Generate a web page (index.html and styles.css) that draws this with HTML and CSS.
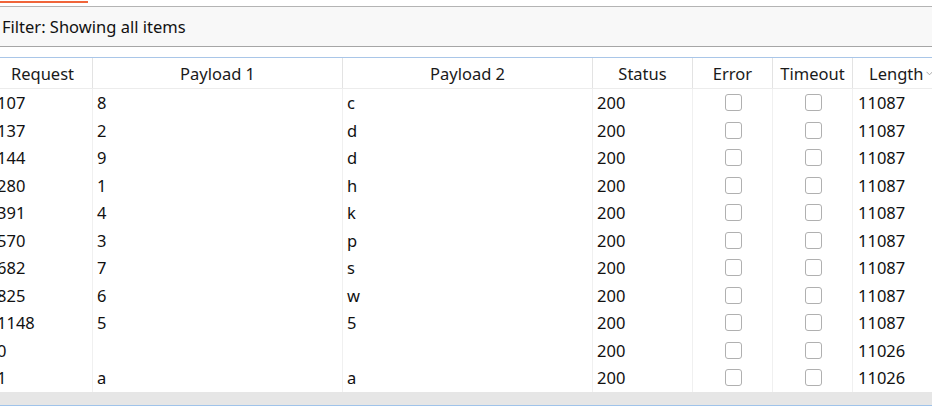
FILE: index.html
```html
<!DOCTYPE html>
<html>
<head>
<meta charset="utf-8">
<link rel="stylesheet" href="styles.css">
</head>
<body>
<div class="tabs"><div class="tab-active"></div></div>
<div class="filter">Filter: Showing all items</div>
<div class="table">
  <div class="row head">
    <div class="c">Request</div>
    <div class="c">Payload 1</div>
    <div class="c">Payload 2</div>
    <div class="c">Status</div>
    <div class="c">Error</div>
    <div class="c">Timeout</div>
    <div class="c last">Length<span class="sort"><svg width="7" height="5" viewBox="0 0 7 5"><path d="M0.5 0.8 L3.5 3.8 L6.5 0.8" fill="none" stroke="#a8a8a8" stroke-width="1"/></svg></span></div>
  </div>
  <div class="body">
    <div class="row"><div class="c">107</div><div class="c">8</div><div class="c">c</div><div class="c">200</div><div class="c cb"><span class="box"></span></div><div class="c cb"><span class="box"></span></div><div class="c last">11087</div></div>
    <div class="row"><div class="c">137</div><div class="c">2</div><div class="c">d</div><div class="c">200</div><div class="c cb"><span class="box"></span></div><div class="c cb"><span class="box"></span></div><div class="c last">11087</div></div>
    <div class="row"><div class="c">144</div><div class="c">9</div><div class="c">d</div><div class="c">200</div><div class="c cb"><span class="box"></span></div><div class="c cb"><span class="box"></span></div><div class="c last">11087</div></div>
    <div class="row"><div class="c">280</div><div class="c">1</div><div class="c">h</div><div class="c">200</div><div class="c cb"><span class="box"></span></div><div class="c cb"><span class="box"></span></div><div class="c last">11087</div></div>
    <div class="row"><div class="c">391</div><div class="c">4</div><div class="c">k</div><div class="c">200</div><div class="c cb"><span class="box"></span></div><div class="c cb"><span class="box"></span></div><div class="c last">11087</div></div>
    <div class="row"><div class="c">570</div><div class="c">3</div><div class="c">p</div><div class="c">200</div><div class="c cb"><span class="box"></span></div><div class="c cb"><span class="box"></span></div><div class="c last">11087</div></div>
    <div class="row"><div class="c">682</div><div class="c">7</div><div class="c">s</div><div class="c">200</div><div class="c cb"><span class="box"></span></div><div class="c cb"><span class="box"></span></div><div class="c last">11087</div></div>
    <div class="row"><div class="c">825</div><div class="c">6</div><div class="c">w</div><div class="c">200</div><div class="c cb"><span class="box"></span></div><div class="c cb"><span class="box"></span></div><div class="c last">11087</div></div>
    <div class="row"><div class="c">1148</div><div class="c">5</div><div class="c">5</div><div class="c">200</div><div class="c cb"><span class="box"></span></div><div class="c cb"><span class="box"></span></div><div class="c last">11087</div></div>
    <div class="row"><div class="c">0</div><div class="c"></div><div class="c"></div><div class="c">200</div><div class="c cb"><span class="box"></span></div><div class="c cb"><span class="box"></span></div><div class="c last">11026</div></div>
    <div class="row"><div class="c">1</div><div class="c">a</div><div class="c">a</div><div class="c">200</div><div class="c cb"><span class="box"></span></div><div class="c cb"><span class="box"></span></div><div class="c last">11026</div></div>
  </div>
  <div class="hscroll"></div>
</div>
</body>
</html>
```

FILE: styles.css
```css
html, body {
  margin: 0;
  padding: 0;
  background: #ffffff;
  overflow: hidden;
}
body {
  width: 932px;
  height: 408px;
  font-family: "Noto Sans", "Open Sans", sans-serif;
  font-size: 16.5px;
  color: #111111;
}
.tabs {
  height: 6px;
  box-sizing: border-box;
  padding-top: 1px;
}
.tab-active {
  width: 88px;
  height: 2px;
  background: #f0653a;
}
.filter {
  height: 41px;
  box-sizing: border-box;
  border-top: 1px solid #b4b4b4;
  border-bottom: 1px solid #a6a6a6;
  background: #f8f8f8;
  padding-left: 2px;
  display: flex;
  align-items: center;
  color: #111111;
}
.table {
  margin-top: 10px;
  margin-left: -7px;
  width: 939px;
  border-top: 1px solid #a9c6e8;
}
.row {
  display: grid;
  grid-template-columns: 100px 250px 250px 100px 80px 80px 79px;
  height: 27.5px;
}
.row .c {
  box-sizing: border-box;
  border-right: 1px solid #f0f0f0;
  padding-left: 4px;
  display: flex;
  align-items: center;
  white-space: nowrap;
  overflow: hidden;
}
.row .c.last {
  border-right: none;
  padding-left: 5px;
}
.head {
  height: 31px;
  box-sizing: border-box;
  border-bottom: 1px solid #ececec;
}
.head .c {
  justify-content: center;
  padding-left: 0;
  border-right: 1px solid #e3e3e3;
  color: #1a1a1a;
}
.head .c.last {
  justify-content: flex-start;
  padding-left: 16px;
  position: relative;
}
.sort {
  position: absolute;
  left: 73px;
  top: 12px;
  display: block;
  line-height: 0;
}
.row .c.cb {
  justify-content: center;
  padding-left: 1px;
}
.box {
  width: 15px;
  height: 15px;
  border: 1px solid #b0b0b0;
  border-radius: 3px;
  background: #ffffff;
}
.hscroll {
  height: 13.5px;
  background: #e6e6e6;
  border-bottom: 1px solid #9fc3ea;
  margin-left: 7px;
}
```
